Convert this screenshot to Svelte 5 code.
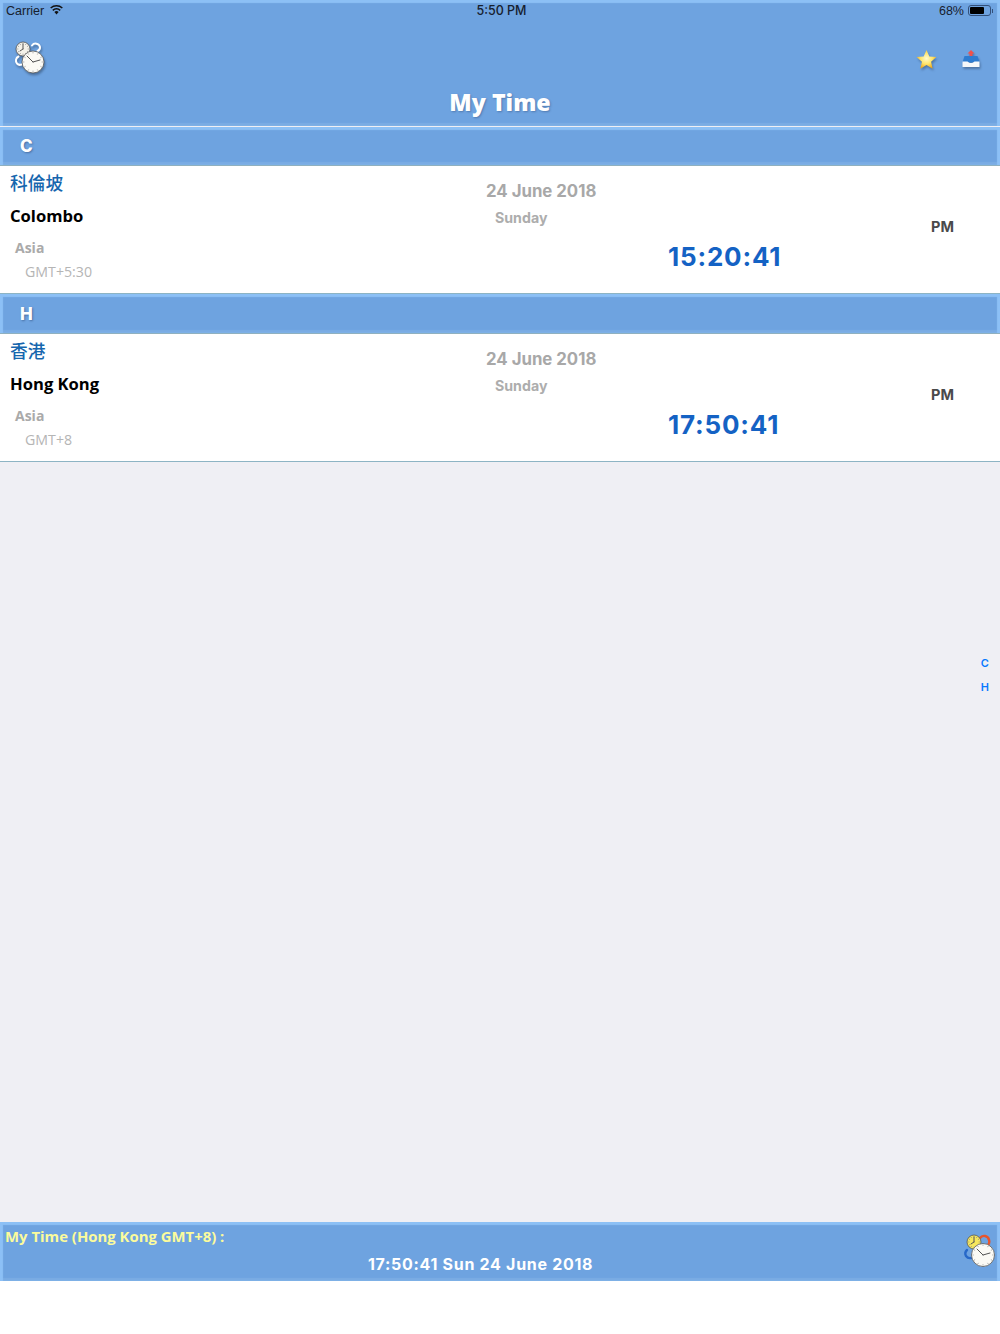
<script>
  const sections = [
    { letter: 'C', zh: '科倫坡', city: 'Colombo', gmt: 'GMT+5:30', time: '15:20:41' },
    { letter: 'H', zh: '香港', city: 'Hong Kong', gmt: 'GMT+8', time: '17:50:41' }
  ];
  const ticks = [0, 30, 60, 90, 120, 150, 180, 210, 240, 270, 300, 330];
</script>

{#snippet clock(cx, cy, r, fill, h1, h2)}
  <circle {cx} {cy} {r} fill={fill} stroke="#555" stroke-width="0.8" />
  {#each ticks as t}
    <line x1={cx} y1={cy - r + 1} x2={cx} y2={cy - r + 2.4} stroke="#888" stroke-width="0.6" transform="rotate({t} {cx} {cy})" />
  {/each}
  <path d="M{cx} {cy} L{cx + h1[0]} {cy + h1[1]} M{cx} {cy} L{cx + h2[0]} {cy + h2[1]}" stroke="#555" stroke-width="1" fill="none" stroke-linecap="round" />
{/snippet}

<div class="page">
  <header class="nav bar">
    <div class="status">
      <div class="st-left">
        <span>Carrier</span>
        <svg class="wifi" viewBox="0 0 16 12" width="15" height="11">
          <path d="M8 11.5 5.7 8.8a3.4 3.4 0 0 1 4.6 0Z" fill="#111" />
          <path d="M4.5 7.5a5.3 5.3 0 0 1 7 0l1.1-1.3a7 7 0 0 0-9.2 0Z" fill="#111" />
          <path d="M2.2 5a8.6 8.6 0 0 1 11.6 0l1.1-1.3a10.3 10.3 0 0 0-13.8 0Z" fill="#111" />
        </svg>
      </div>
      <span class="st-time">5:50 PM</span>
      <div class="st-right">
        <span>68%</span>
        <span class="batt"><span class="batt-fill"></span></span>
        <span class="batt-tip"></span>
      </div>
    </div>
    <div class="nav-icons">
      <svg class="ic-clocks" viewBox="0 0 36 36" width="36" height="36">
        <g fill="none" stroke="#fff" stroke-width="2" stroke-linecap="round">
          <path d="M20 4.5 a4.5 4.5 0 0 1 8 1.5 a4 4 0 0 1 -2.5 4" />
          <path d="M6.5 15.5 a4.5 4.5 0 0 0 -1.5 7 a4 4 0 0 0 4.5 1" />
        </g>
        {@render clock(11, 8, 7, '#f4f2ea', [0, -5], [-3, 2])}
        {@render clock(21, 21, 11, '#fbfaf5', [-6, -6], [7, -2])}
      </svg>
      <div class="nav-right">
        <svg viewBox="0 0 24 24" width="23" height="23" class="star">
          <defs>
            <radialGradient id="st" cx="0.5" cy="0.45" r="0.55">
              <stop offset="0" stop-color="#fffbd0" />
              <stop offset="0.55" stop-color="#fee46a" />
              <stop offset="1" stop-color="#eba51c" />
            </radialGradient>
          </defs>
          <path d="M12 2 15 8.8 22.3 9.5 16.8 14.4 18.4 21.6 12 17.8 5.6 21.6 7.2 14.4 1.7 9.5 9 8.8Z" fill="url(#st)" />
        </svg>
        <svg viewBox="0 0 20 20" width="20" height="20" class="inbox">
          <path d="M10 1 13.5 4.5H11.5V7H8.5V4.5H6.5Z" fill="#f2504a" />
          <path d="M3.5 7H16.5L18.5 13.5H1.5Z" fill="#2e7cd0" />
          <path d="M1.5 12.5H6.5Q10 15.5 13.5 12.5H18.5V18H1.5Z" fill="#f6f8fa" />
        </svg>
      </div>
    </div>
    <h1>My Time</h1>
  </header>

  <main class="list">
    {#each sections as s}
      <div class="sec bar"><span>{s.letter}</span></div>
      <div class="row">
        <div class="place">
          <div class="zh">{s.zh}</div>
          <div class="city">{s.city}</div>
          <div class="region">Asia</div>
          <div class="gmt">{s.gmt}</div>
        </div>
        <div class="dates">
          <div class="date">24 June 2018</div>
          <div class="day">Sunday</div>
        </div>
        <div class="time">{s.time}</div>
        <div class="ampm">PM</div>
      </div>
    {/each}
    <div class="index"><span>C</span><span>H</span></div>
  </main>

  <footer class="foot bar">
    <div class="foot-l">My Time (Hong Kong GMT+8) :</div>
    <div class="foot-t">17:50:41 Sun 24 June 2018</div>
    <svg class="foot-ic" viewBox="0 0 36 36" width="36" height="36">
      <g fill="none" stroke-width="2.4" stroke-linecap="round">
        <path d="M18 4 a5 5 0 0 1 9 2 a5 5 0 0 1 -1 5" stroke="#e8552c" />
        <path d="M5 16 a5 5 0 0 0 -1 6 a5 5 0 0 0 5 2" stroke="#2768c8" />
      </g>
      {@render clock(12, 8, 7, '#f6e75c', [0, -5], [-3, 2])}
      {@render clock(21, 21, 11.5, '#fbfaf5', [-6, -6], [7, -2])}
    </svg>
  </footer>
</div>

<style>
  :global(body) {
    margin: 0;
    background: #fff;
  }
  .page {
    width: 1000px;
    height: 1334px;
    display: flex;
    flex-direction: column;
    font-family: Inter, "Noto Sans CJK TC", sans-serif;
    background: #fff;
    overflow: hidden;
  }
  .bar {
    background: #6ea3e0;
    box-shadow: inset 3px 0 1px #8cc0f6, inset -3px 0 1px #8cc0f6, inset 0 3px 1px #8cc0f6, inset 0 -3px 1px #7aace4;
  }
  .nav {
    height: 126px;
    box-sizing: border-box;
    position: relative;
    flex: none;
  }
  .status {
    height: 20px;
    display: flex;
    justify-content: space-between;
    align-items: center;
    padding: 1px 7px 0 6px;
    box-sizing: border-box;
    font: 12.5px/20px "Liberation Sans", sans-serif;
    color: #16202e;
    position: relative;
  }
  .st-left, .st-right {
    display: flex;
    align-items: center;
    gap: 5px;
  }
  .st-right { gap: 3px; }
  .wifi { margin-top: -2px; }
  .st-time {
    position: absolute;
    left: 0;
    right: 0;
    text-align: center;
    font: 500 12.5px/20px Inter, sans-serif;
    padding-left: 3px;
  }
  .batt {
    border: 1px solid #33507a;
    border-radius: 3px;
    padding: 1px;
    box-sizing: border-box;
    display: flex;
    margin-left: 1px;
    width: 23px;
    height: 11px;
  }
  .batt-fill {
    width: 14px;
    background: #000;
    border-radius: 1px;
  }
  .batt-tip {
    width: 1px;
    height: 4px;
    background: #33507a;
    margin-left: -2px;
  }
  .nav-icons {
    display: flex;
    justify-content: space-between;
    align-items: center;
    height: 40px;
    margin-top: 19px;
    padding: 0 19px 0 12px;
  }
  .ic-clocks { filter: drop-shadow(1px 2px 1px rgba(30, 50, 80, 0.45)); }
  .nav-right {
    display: flex;
    align-items: center;
    gap: 23px;
  }
  .star, .inbox { filter: drop-shadow(1px 2px 1px rgba(30, 50, 80, 0.4)); }
  h1 {
    margin: 0;
    padding-top: 8px;
    text-align: center;
    font: 800 23.2px/30px "Open Sans", Inter, sans-serif;
    color: #fff;
    text-shadow: 1px 1px 2px rgba(30, 50, 90, 0.35);
  }
  .list {
    flex: 1;
    background: #efeff4;
    position: relative;
    padding-top: 1px;
    min-height: 0;
  }
  .sec {
    height: 38px;
    display: flex;
    align-items: center;
    padding-left: 20px;
    border-bottom: 1px solid #8fb0bf;
    box-sizing: content-box;
    font: 800 17px/1 Inter, sans-serif;
    color: #fff;
    text-shadow: 1px 1px 2px rgba(30, 50, 90, 0.45);
  }
  .row {
    height: 127px;
    background: #fff;
    border-bottom: 1px solid #8db4c4;
    display: flex;
    position: relative;
  }
  .row + .sec { padding-top: 1px; }
  .place {
    width: 476px;
    padding-left: 10px;
    box-sizing: border-box;
    flex: none;
  }
  .zh {
    font: 500 17.7px/24px "Noto Sans CJK TC", sans-serif;
    color: #1666ae;
    margin-top: 4px;
  }
  .city {
    font: 700 16.6px/20px "Open Sans", Inter, sans-serif;
    color: #000;
    margin-top: 12px;
  }
  .region {
    font: 700 14px/18px "Open Sans", Inter, sans-serif;
    color: #aaa;
    margin: 13px 0 0 5px;
  }
  .gmt {
    font: 400 14.2px/18px "Open Sans", Inter, sans-serif;
    color: #b5b5b5;
    margin: 6px 0 0 15px;
  }
  .dates {
    width: 182px;
    padding-left: 10px;
    box-sizing: border-box;
    flex: none;
  }
  .date {
    font: 700 16.8px/22px Inter, sans-serif;
    color: #a8a8a8;
    margin-top: 14px;
  }
  .day {
    font: 700 14.2px/20px Inter, sans-serif;
    color: #adadad;
    margin: 6px 0 0 9px;
  }
  .time {
    width: 263px;
    flex: none;
    padding: 75px 0 0 10px;
    box-sizing: border-box;
    font: 700 26px/32px Inter, sans-serif;
    color: #1462c4;
    letter-spacing: 0.8px;
  }
  .ampm {
    padding-top: 52px;
    padding-left: 10px;
    font: 700 14.5px/18px Inter, sans-serif;
    color: #4a4a4a;
  }
  .index {
    position: absolute;
    right: 11px;
    top: 531px;
    display: flex;
    flex-direction: column;
    gap: 11px;
    font: 600 11px/13px Inter, sans-serif;
    color: #0a7aff;
    text-align: center;
  }
  .foot {
    height: 59px;
    flex: none;
    position: relative;
    margin-bottom: 53px;
    box-sizing: border-box;
  }
  .foot-l {
    padding: 4px 0 0 5px;
    font: 700 14.9px/20px "Open Sans", Inter, sans-serif;
    color: #fbfb9c;
  }
  .foot-t {
    margin: 7px 0 0 368px;
    font: 700 16px/22px Inter, sans-serif;
    color: #fff;
    letter-spacing: 0.7px;
  }
  .foot-ic {
    position: absolute;
    right: 2px;
    top: 12px;
  }
</style>
